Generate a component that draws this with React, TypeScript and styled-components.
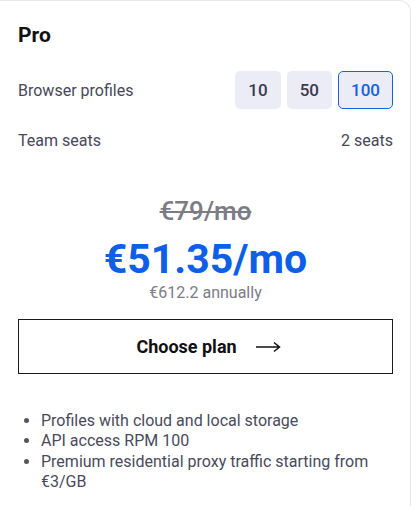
import React, { useState } from "react";
import styled, { createGlobalStyle } from "styled-components";

const GlobalStyle = createGlobalStyle`
  body {
    margin: 0;
    background: #ffffff;
    font-family: Roboto, "Liberation Sans", sans-serif;
  }
`;

const Card = styled.div`
  width: 411px;
  height: 506px;
  box-sizing: border-box;
  background: #ffffff;
  border-top: 1px solid #e6e6e9;
  border-right: 1px solid #e6e6e9;
  border-top-right-radius: 12px;
  padding: 20px 17px 0 18px;
  color: #44445a;
`;

const Title = styled.h2`
  margin: 0;
  font-size: 21px;
  font-weight: 700;
  color: #111114;
  line-height: 28px;
`;

const OptionRow = styled.div<{ $top: number }>`
  display: flex;
  align-items: center;
  justify-content: space-between;
  margin-top: ${(p) => p.$top}px;
  font-size: 16px;
  color: #474759;
`;

const Choices = styled.div`
  display: flex;
  gap: 6px;
`;

const Choice = styled.button<{ $active: boolean }>`
  height: 38px;
  padding: 0 12px;
  border-radius: 5px;
  border: 1px solid ${(p) => (p.$active ? "#1a63e0" : "transparent")};
  background: #ececf6;
  color: ${(p) => (p.$active ? "#1560e6" : "#3b3b4d")};
  font-family: inherit;
  font-size: 17px;
  font-weight: 500;
  cursor: pointer;
`;

const Pricing = styled.div`
  display: flex;
  flex-direction: column;
  align-items: center;
  margin-top: 47px;
`;

const OldPrice = styled.div`
  font-size: 26px;
  font-weight: 500;
  color: #7c7c86;
  text-decoration: line-through;
  line-height: 28px;
`;

const Price = styled.div`
  font-size: 41px;
  font-weight: 700;
  color: #0d5fe8;
  line-height: 48px;
  margin-top: 10px;
`;

const Annual = styled.div`
  font-size: 16px;
  color: #7c7c86;
  line-height: 20px;
`;

const ChooseButton = styled.button`
  display: flex;
  align-items: center;
  justify-content: center;
  gap: 18px;
  width: 100%;
  height: 55px;
  margin-top: 16px;
  padding: 0 0 0 6px;
  background: #ffffff;
  border: 1px solid #1b1b1f;
  font-family: inherit;
  font-size: 18px;
  font-weight: 700;
  color: #111114;
  cursor: pointer;
`;

const Features = styled.ul`
  margin: 37px 0 0 0;
  padding-left: 23px;
  font-size: 16px;
  line-height: 20.4px;
  color: #4a4a5c;

  li::marker {
    color: #55555f;
  }
`;

const Arrow = () => (
  <svg width="26" height="12" viewBox="0 0 26 12" fill="none">
    <path d="M1 6H24M19 1.5L24.5 6L19 10.5" stroke="#111114" strokeWidth="1.5" />
  </svg>
);

export default function App() {
  const [profiles, setProfiles] = useState(100);

  return (
    <>
      <GlobalStyle />
      <Card>
        <Title>Pro</Title>
        <OptionRow $top={22}>
          <span>Browser profiles</span>
          <Choices>
            {[10, 50, 100].map((n) => (
              <Choice key={n} $active={profiles === n} onClick={() => setProfiles(n)}>
                {n}
              </Choice>
            ))}
          </Choices>
        </OptionRow>
        <OptionRow $top={22}>
          <span>Team seats</span>
          <span>2 seats</span>
        </OptionRow>
        <Pricing>
          <OldPrice>€79/mo</OldPrice>
          <Price>€51.35/mo</Price>
          <Annual>€612.2 annually</Annual>
        </Pricing>
        <ChooseButton>
          Choose plan
          <Arrow />
        </ChooseButton>
        <Features>
          <li>Profiles with cloud and local storage</li>
          <li>API access RPM 100</li>
          <li>Premium residential proxy traffic starting from €3/GB</li>
        </Features>
      </Card>
    </>
  );
}
